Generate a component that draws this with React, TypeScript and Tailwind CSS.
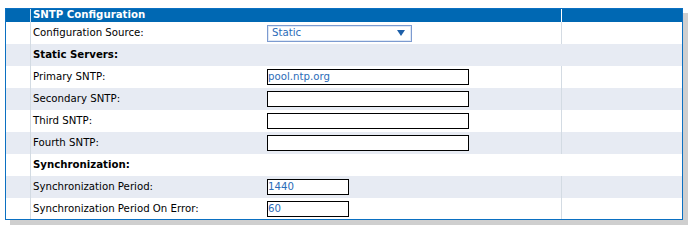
import React from "react";

const font = { fontFamily: '"DejaVu Sans", Verdana, sans-serif' };

function Row({
  gray,
  label,
  children,
  last,
}: {
  gray?: boolean;
  label: string;
  children?: React.ReactNode;
  last?: boolean;
}) {
  return (
    <div className={`flex ${last ? "h-[21px]" : "h-[22px]"} ${gray ? "bg-[#e7ebf3]" : "bg-white"}`}>
      <div className="w-[24px] shrink-0" />
      <div className="w-px shrink-0 bg-[#d3dbe3]" />
      <div className="w-[530px] shrink-0 flex items-center">
        <div className="w-[236px] shrink-0 pl-[2px] text-[10.2px] text-black">{label}</div>
        {children}
      </div>
      <div className="w-px shrink-0 bg-[#d3dbe3]" />
      <div className="flex-1" />
    </div>
  );
}

function Section({ gray, label }: { gray?: boolean; label: string }) {
  return (
    <div className={`flex h-[22px] ${gray ? "bg-[#e7ebf3]" : "bg-white"}`}>
      <div className="w-[24px] shrink-0" />
      <div className="w-px shrink-0 bg-[#d3dbe3]" />
      <div className="flex-1 flex items-center pl-[2px] text-[10.2px] font-bold text-black">{label}</div>
    </div>
  );
}

function TextBox({ value, w }: { value?: string; w: string }) {
  return (
    <div
      className={`${w} h-[16px] border border-black bg-white flex items-center pt-px text-[10.2px] text-[#2b6cb8] leading-none`}
    >
      {value}
    </div>
  );
}

export default function App() {
  return (
    <div className="w-[689px] h-[228px] bg-white pt-[8px] pl-[5px]" style={font}>
      <div className="w-[678px] border border-[#0b70c2] shadow-[5px_5px_0_#cfcfcf]">
        <div className="flex h-[13px] bg-[#0068b3]">
          <div className="w-[24px] shrink-0" />
          <div className="w-px shrink-0 bg-[#cfe0ee]" />
          <div className="w-[530px] shrink-0 flex items-center pl-[2px] text-[10.2px] font-bold text-white leading-none">
            SNTP Configuration
          </div>
          <div className="w-px shrink-0 bg-white" />
          <div className="flex-1" />
        </div>
        <Row label="Configuration Source:">
          <div className="w-[145px] h-[17px] border border-[#7d9bd0] bg-white flex items-center justify-between pl-[4px] pr-[6px] text-[10.2px] text-[#2b6cb8] leading-none shadow-[inset_0_0_0_1px_#dfe8f5]">
            <span>Static</span>
            <svg width="8" height="6" viewBox="0 0 8 6">
              <polygon points="0,0 8,0 4,6" fill="#1d5fa8" />
            </svg>
          </div>
        </Row>
        <Section gray label="Static Servers:" />
        <Row label="Primary SNTP:">
          <TextBox w="w-[202px]" value="pool.ntp.org" />
        </Row>
        <Row gray label="Secondary SNTP:">
          <TextBox w="w-[202px]" />
        </Row>
        <Row label="Third SNTP:">
          <TextBox w="w-[202px]" />
        </Row>
        <Row gray label="Fourth SNTP:">
          <TextBox w="w-[202px]" />
        </Row>
        <Section label="Synchronization:" />
        <Row gray label="Synchronization Period:">
          <TextBox w="w-[82px]" value="1440" />
        </Row>
        <Row last label="Synchronization Period On Error:">
          <TextBox w="w-[82px]" value="60" />
        </Row>
      </div>
    </div>
  );
}
